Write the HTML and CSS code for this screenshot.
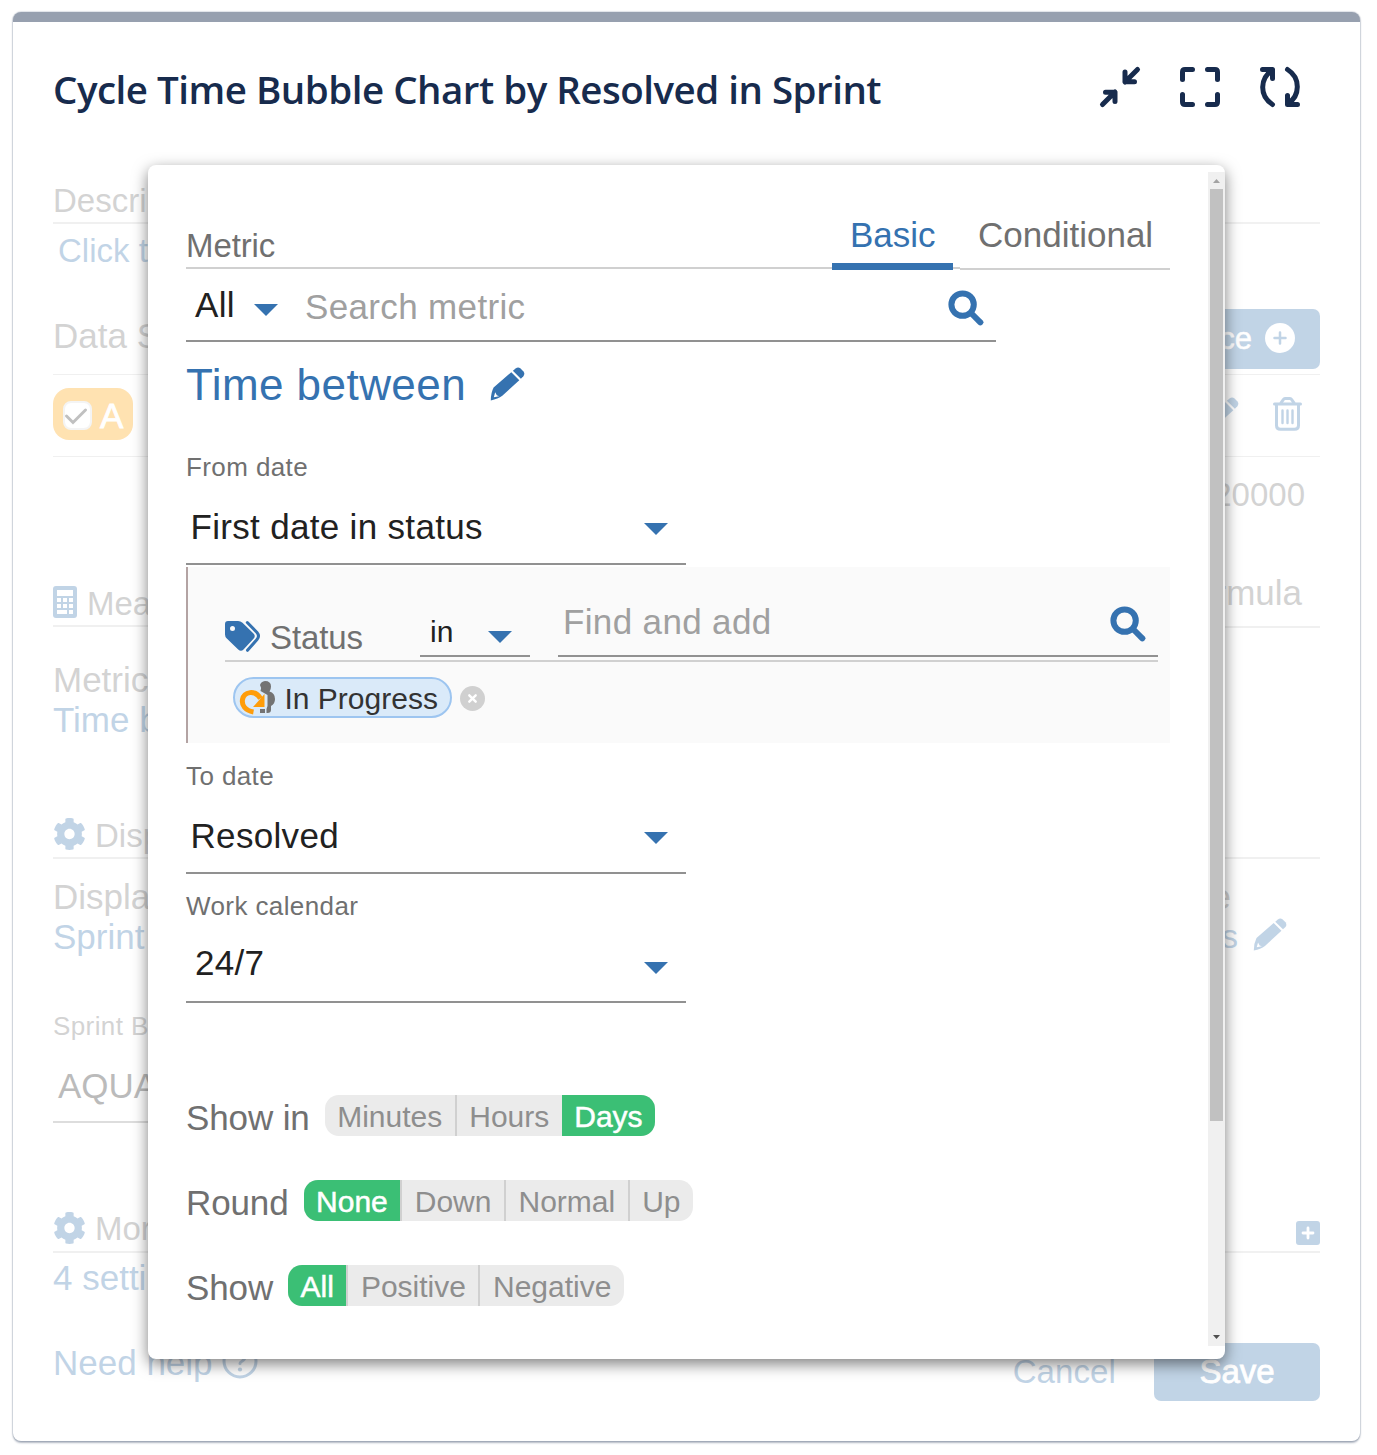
FILE: index.html
```html
<!DOCTYPE html>
<html lang="en">
<head>
<meta charset="utf-8">
<title>Cycle Time Bubble Chart by Resolved in Sprint</title>
<link rel="stylesheet" href="styles.css">
</head>
<body>
<svg class="sprite" width="0" height="0" aria-hidden="true">
  <symbol id="gear" viewBox="0 0 512 512"><path d="M487.4 315.7l-42.6-24.6c4.3-23.2 4.3-47 0-70.2l42.6-24.6c4.9-2.8 7.1-8.6 5.5-14-11.1-35.6-30-67.8-54.7-94.6-3.8-4.1-10-5.1-14.8-2.3L380.8 110c-17.9-15.4-38.5-27.3-60.8-35.1V25.8c0-5.6-3.9-10.5-9.4-11.7-36.7-8.2-74.3-7.8-109.2 0-5.5 1.2-9.4 6.1-9.4 11.7V75c-22.2 7.9-42.8 19.8-60.8 35.1L88.7 85.5c-4.9-2.8-11-1.9-14.8 2.3-24.7 26.7-43.6 58.9-54.7 94.6-1.7 5.4.6 11.2 5.5 14L67.3 221c-4.3 23.2-4.3 47 0 70.2l-42.6 24.6c-4.9 2.8-7.1 8.6-5.5 14 11.1 35.6 30 67.8 54.7 94.6 3.8 4.1 10 5.1 14.8 2.3l42.6-24.6c17.9 15.4 38.5 27.3 60.8 35.1v49.2c0 5.6 3.9 10.5 9.4 11.7 36.7 8.2 74.3 7.8 109.2 0 5.5-1.2 9.4-6.1 9.4-11.7v-49.2c22.2-7.9 42.8-19.8 60.8-35.1l42.6 24.6c4.9 2.8 11 1.9 14.8-2.3 24.7-26.7 43.6-58.9 54.7-94.6 1.5-5.5-.7-11.3-5.6-14.1zM256 336c-44.1 0-80-35.9-80-80s35.9-80 80-80 80 35.9 80 80-35.9 80-80 80z"/></symbol>
  <symbol id="pencil" viewBox="0 0 35 34"><path fill-rule="evenodd" d="M3.600 20.500L21.300 5.200l8 8L12.300 28.800Q8 32.200 .8 33.400Q.8 26 3.600 20.500ZM5.200 25.200L3.800 30.200L9.200 29.200L6.800 28.300Z"/><path d="M22.900 3.800L25.600 1.500Q28 -.2 30.300 1.300L33.500 4.500Q35.200 7 33.400 9.200L30.900 11.700Z"/></symbol>
  <symbol id="search" viewBox="0 0 36 36"><g fill="none" stroke="currentColor" stroke-width="6" stroke-linecap="round"><circle cx="14.600" cy="14.600" r="11.200"/><path d="M23 23L32.300 32.300"/></g></symbol>
  <symbol id="caret" viewBox="0 0 24 12"><path d="M0 0H24L12 12Z"/></symbol>
</svg>

<main class="card">
  <header class="card-head">
    <h1>Cycle Time Bubble Chart by Resolved in Sprint</h1>
    <div class="tools">
      <svg width="40" height="40" viewBox="0 0 40 40"><path d="M37.500 2.500L25 15M25 5V14.800H34.500M2.500 37.500L15 25M5.500 25.200H15V34.500"/></svg>
      <svg width="40" height="40" viewBox="0 0 40 40"><path d="M2.500 12.500V5Q2.500 2.500 5 2.500H12.500M27.500 2.500H35Q37.500 2.500 37.500 5V12.500M37.500 27.500V35Q37.500 37.500 35 37.500H27.500M12.500 37.500H5Q2.500 37.500 2.500 35V27.500"/></svg>
      <svg width="40" height="40" viewBox="0 0 40 40"><path d="M2.500 2.500H12.500V11.500M12 3.500C0 11 -1 29 12.500 37.500M37.500 37.500H27.500V28.500M28 36.500C40 29 41 11 27.500 2.500"/></svg>
    </div>
  </header>

  <div class="settings">
    <div class="section">Descrip</div>
    <div class="link description">Click t</div>

    <div class="sources-head">
      <span>Data S</span>
      <button class="add-source">Source
        <svg width="30" height="30" viewBox="0 0 30 30"><circle cx="15" cy="15" r="15" fill="#fff"/><path d="M15 9.500V20.500M9.500 15H20.500" stroke="#3572b0" stroke-width="2.500" stroke-linecap="round"/></svg>
      </button>
    </div>
    <div class="source">
      <div class="source-tag">
        <svg width="29" height="29" viewBox="0 0 29 29"><rect x="1" y="1" width="27" height="27" rx="7" fill="#fff" stroke="#ddd" stroke-width="2"/><path d="M3.500 15L10 21.500L22.500 9" fill="none" stroke="#333" stroke-width="3" stroke-linecap="round"/></svg>
        <span>A</span>
      </div>
      <div class="source-actions">
        <svg width="35" height="34"><use href="#pencil"/></svg>
        <svg width="29" height="35" viewBox="0 0 29 35"><g fill="none" stroke="#3572b0" stroke-linecap="round"><path stroke-width="3" d="M1.500 7H27.500M7.500 6.500L10.500 2.300Q11 1.500 12 1.500H17Q18 1.500 18.500 2.300L21.500 6.500M3.500 8V28.500Q3.500 32.300 7.500 32.300H21.500Q25.500 32.300 25.500 28.500V8"/><path stroke-width="2.400" d="M9.500 13.500V26M14.500 13.500V26M19.500 13.500V26"/></g></svg>
      </div>
    </div>
    <div class="limit">20000</div>

    <div class="measure-head">
      <div class="measure-title">
        <svg width="24" height="32" viewBox="0 0 24 32"><rect width="24" height="32" rx="3"/><path fill="#fff" d="M4 4H20V10H4ZM4 12H8V16H4ZM10 12H14V16H10ZM16 12H20V16H16ZM4 18H8V22H4ZM10 18H14V22H10ZM16 18H20V22H16ZM4 24H14V28H4ZM16 24H20V28H16Z"/></svg>
        <span>Mea</span>
      </div>
      <div class="measure-tab">Formula</div>
    </div>
    <div class="field measure-field"><span>Metric</span><span class="link">Time b</span></div>

    <div class="section display-head"><svg width="33" height="34"><use href="#gear"/></svg><span>Disp</span></div>
    <div class="columns">
      <div class="field"><span>Displa</span><span class="link">Sprint</span></div>
      <div class="field right-field"><span>e</span><div class="link">s <svg width="34" height="33"><use href="#pencil"/></svg></div></div>
    </div>
    <div class="small board-label">Sprint B</div>
    <div class="board">AQUA</div>

    <div class="section more-head"><svg width="33" height="34"><use href="#gear"/></svg><span>Mor</span>
      <svg class="expand" width="24" height="24" viewBox="0 0 24 24"><rect width="24" height="24" rx="3"/><path d="M12 7V17M7 12H17" stroke="#fff" stroke-width="2.800" stroke-linecap="round"/></svg>
    </div>
    <div class="link more-value">4 setti</div>

    <footer>
      <a class="help">Need help <svg width="36" height="36" viewBox="0 0 36 36"><circle cx="18" cy="18" r="16" fill="none" stroke="#3572b0" stroke-width="3"/><path d="M13 14Q13 9.500 18 9.500Q23 9.500 23 14Q23 16.500 20 18.200Q18 19.300 18 20.500" fill="none" stroke="#3572b0" stroke-width="3" stroke-linecap="round"/><circle cx="18" cy="26.500" r="2.100"/></svg></a>
      <a class="cancel">Cancel</a>
      <button class="save">Save</button>
    </footer>
  </div>
</main>

<section class="dialog">
  <div class="dialog-body">
    <div class="dialog-head">
      <div class="dialog-title">Metric</div>
      <div class="tab active">Basic</div>
      <div class="tab-gap"></div>
      <div class="tab">Conditional</div>
    </div>
    <div class="metric-search">
      <span class="scope">All</span>
      <svg class="caret" width="24" height="12"><use href="#caret"/></svg>
      <span class="hint">Search metric</span>
      <svg class="find" width="36" height="36"><use href="#search"/></svg>
    </div>
    <div class="metric-name"><span>Time between</span><svg width="35" height="34"><use href="#pencil"/></svg></div>

    <div class="small from-label">From date</div>
    <div class="select"><span>First date in status</span><svg width="24" height="12"><use href="#caret"/></svg></div>

    <div class="filter">
      <div class="filter-row">
        <svg class="tags" width="35" height="31" viewBox="0 0 35 31"><path fill-rule="evenodd" d="M0 3Q0 0 3 0H13Q15.500 0 17.500 1.800L28.500 12.500Q31 15 28.500 17.800L18.500 28.500Q16 31 13.200 28.500L1.800 17.500Q0 15.700 0 13.500ZM7.500 5A2.500 2.500 0 1 0 7.500 10A2.500 2.500 0 1 0 7.500 5Z"/><path d="M22.300 1.500L32 11.500Q35 15 32 18.500L22.500 29.300" fill="none" stroke="currentColor" stroke-width="3" stroke-linecap="round"/></svg>
        <span class="filter-name">Status</span>
        <div class="operator"><span>in</span><svg width="24" height="12"><use href="#caret"/></svg></div>
        <div class="finder"><span class="hint">Find and add</span><svg width="36" height="36"><use href="#search"/></svg></div>
      </div>
      <div class="chips">
        <div class="chip">
          <svg width="36" height="34" viewBox="0 0 36 34"><g fill="#737373"><path d="M25 0Q31 0 31 5.500Q31 8.500 29.500 10.500Q35 12 35 18Q35 23 31 25V29Q31 32 27.500 32H26.500V28L27.500 25V14L20.500 10Q22 7 20 4Q21 .5 25 0Z"/><path d="M20 28H25V32H20Z"/></g><path d="M13.500 31C5 29.500 1.500 24 2.500 18.500C4 10.500 15 8.500 20.500 17.500" fill="none" stroke="#ff9d0a" stroke-width="5"/><path fill="#ff9d0a" d="M24.500 13V26H13L17.500 21Z"/></svg>
          <span>In Progress</span>
        </div>
        <svg class="remove" width="25" height="25" viewBox="0 0 25 25"><circle cx="12.500" cy="12.500" r="12.500" fill="#d0d0d0"/><path d="M9.300 9.300L15.700 15.700M15.700 9.300L9.300 15.700" stroke="#fff" stroke-width="2.400" stroke-linecap="round"/></svg>
      </div>
    </div>

    <div class="small to-label">To date</div>
    <div class="select"><span>Resolved</span><svg width="24" height="12"><use href="#caret"/></svg></div>
    <div class="small calendar-label">Work calendar</div>
    <div class="select calendar"><span>24/7</span><svg width="24" height="12"><use href="#caret"/></svg></div>

    <div class="options">
      <div class="option"><span>Show in</span><div class="segments"><b>Minutes</b><b>Hours</b><b class="on">Days</b></div></div>
      <div class="option"><span>Round</span><div class="segments"><b class="on">None</b><b>Down</b><b>Normal</b><b>Up</b></div></div>
      <div class="option"><span>Show</span><div class="segments"><b class="on">All</b><b>Positive</b><b>Negative</b></div></div>
    </div>
  </div>
  <div class="scrollbar">
    <svg width="17" height="17" viewBox="0 0 17 17"><path d="M5 11H12L8.500 7Z" fill="#a3a3a3"/></svg>
    <div class="thumb"></div>
    <svg class="down" width="17" height="17" viewBox="0 0 17 17"><path d="M5 6H12L8.500 10Z" fill="#505050"/></svg>
  </div>
</section>
</body>
</html>
```
FILE: styles.css
```css
* { box-sizing: border-box; }
body {
  margin: 0;
  padding: 12px 17px 14px 13px;
  height: 1455px;
  overflow: hidden;
  background: #fff;
  font-family: "Liberation Sans", Arial, sans-serif;
  font-size: 35px;
  line-height: 40px;
  color: #707070;
  white-space: nowrap;
}
svg { display: block; flex: none; fill: #3572b0; color: #3572b0; overflow: visible; }
.sprite { position: absolute; }
button { border: 0; padding: 0; font: inherit; color: #fff; background: #3572b0; border-radius: 7px; }

.card {
  height: 1429px;
  padding: 0 40px;
  border-top: 10px solid #97a0af;
  border-radius: 8px;
  background: #fff;
  box-shadow: 0 0 1px 1px rgba(9, 30, 66, .13), 0 2px 2px rgba(9, 30, 66, .3);
}
.card-head { display: flex; justify-content: space-between; height: 93px; padding: 39px 20px 0 0; }
h1 {
  margin: 1px 0 0;
  font: 600 38.5px/54px "Open Sans", "Noto Sans", sans-serif;
  letter-spacing: -.5px;
  color: #172b4d;
}
.tools { display: flex; gap: 40px; padding-top: 6px; }
.tools path { fill: none; stroke: #172b4d; stroke-width: 5; stroke-linecap: round; stroke-linejoin: round; }

.settings { opacity: .3; padding-top: 66px; }
.link { color: #3572b0; }
.small { font-size: 26px; line-height: 30px; letter-spacing: .4px; }
.section {
  display: flex;
  gap: 9px;
  height: 43px;
  border-bottom: 2px solid #d0d0d0;
  font-size: 33px;
}
.description { margin-top: 7px; padding-left: 5px; font-size: 33px; }
.sources-head {
  display: flex;
  justify-content: space-between;
  height: 66px;
  margin-top: 38px;
  border-bottom: 1px solid #d0d0d0;
}
.sources-head > span { padding-top: 7px; }
.add-source { display: flex; align-items: center; gap: 13px; height: 60px; padding: 0 25px; font-size: 31px; -webkit-text-stroke: .5px #fff; }
.add-source svg { margin-top: -2px; }
.source { display: flex; justify-content: space-between; height: 82px; padding-top: 13px; border-bottom: 1px solid #d0d0d0; }
.source-tag {
  display: flex;
  gap: 8px;
  width: 80px;
  height: 52px;
  padding: 13px 10px;
  border-radius: 16px;
  background: #ffa000;
  color: #fff;
  -webkit-text-stroke: .8px #fff;
}
.source-tag span { margin-top: -5px; }
.source-actions { display: flex; gap: 34px; padding: 9px 18px 0 0; }
.limit { margin-top: 18px; padding-right: 15px; text-align: right; font-size: 33px; }
.measure-head { display: flex; height: 56px; margin-top: 57px; }
.measure-title {
  display: flex;
  flex: 1;
  gap: 10px;
  height: 55px;
  padding-top: 12px;
  border-bottom: 2px solid #d0d0d0;
  font-size: 33px;
}
.measure-title svg { margin-top: 2px; }
.measure-tab { width: 170px; padding: 1px 18px 0 0; text-align: right; border-bottom: 2px solid #d0d0d0; }
.field { display: flex; flex-direction: column; }
.measure-field { margin-top: 32px; }
.display-head { margin-top: 76px; }
.section > svg { margin: 1px 0 0; }
.columns { display: flex; justify-content: space-between; height: 79px; margin-top: 18px; }
.right-field { text-align: right; }
.right-field > span { padding-right: 89px; }
.right-field .link { display: flex; justify-content: flex-end; gap: 15px; padding-right: 33px; font-size: 33px; }
.right-field svg { margin-top: 1px; }
.board-label { margin-top: 55px; }
.board { width: 500px; height: 82px; padding: 25px 0 0 5px; border-bottom: 2px solid #919191; color: #212121; }
.more-head { margin-top: 87px; }
.more-head > span { margin-top: -1px; }
.more-head > .expand { margin: 11px 0 0 auto; }
.more-value { margin-top: 5px; }
footer { display: flex; margin-top: 45px; height: 58px; color: #3572b0; }
.help { display: flex; flex: 1; gap: 9px; }
.cancel { margin-right: 38px; font-size: 33px; letter-spacing: .1px; line-height: 58px; }
.save { width: 166px; font-size: 33px; line-height: 58px; -webkit-text-stroke: .8px #fff; }

.dialog {
  position: absolute;
  left: 148px;
  top: 165px;
  display: flex;
  justify-content: space-between;
  width: 1077px;
  height: 1194px;
  padding: 7px 0 13px 38px;
  border-radius: 8px;
  background: #fff;
  box-shadow: 0 5px 15px rgba(0, 0, 0, .5);
}
.dialog-body { width: 984px; padding-top: 43px; }
.dialog-head { display: flex; }
.dialog-title { flex: 1; height: 54px; padding-top: 11px; border-bottom: 2px solid #d0d0d0; font-size: 33px; letter-spacing: -.1px; }
.tab { width: 210px; height: 55px; padding-left: 18px; border-bottom: 2px solid #d0d0d0; }
.tab.active { width: 121px; border-bottom: 7px solid #3572b0; color: #3572b0; }
.tab-gap { width: 7px; height: 54px; border-bottom: 2px solid #d0d0d0; }

.metric-search {
  display: flex;
  width: 810px;
  height: 72px;
  padding: 15px 12px 0 9px;
  border-bottom: 2px solid #919191;
}
.scope { width: 59px; color: #212121; letter-spacing: .3px; }
.caret { margin-top: 19px; }
.hint { color: #a0a0a0; letter-spacing: .35px; }
.metric-search .hint { flex: 1; padding: 2px 0 0 27px; }
.find { margin-top: 5px; }
.metric-name { display: flex; gap: 24px; margin-top: 18px; font-size: 44px; line-height: 50px; letter-spacing: .45px; color: #3572b0; }
.metric-name svg { margin-top: 7px; }
.from-label { margin-top: 42px; }
.select {
  display: flex;
  justify-content: space-between;
  width: 500px;
  height: 83px;
  padding: 25px 18px 0 4.5px;
  border-bottom: 2px solid #919191;
  color: #212121;
  letter-spacing: .32px;
}
.select svg { margin-top: 16px; }

.filter { height: 176px; margin-top: 2px; padding: 0 12px 0 37px; border-left: 2px solid #b3a3a3; background: #fafafa; }
.filter-row { display: flex; height: 95px; border-bottom: 2px solid #d0d0d0; }
.tags { margin-top: 54px; }
.filter-name { width: 160px; padding: 51px 0 0 10px; font-size: 33px; letter-spacing: -.1px; }
.operator {
  display: flex;
  justify-content: space-between;
  width: 110px;
  height: 90px;
  padding: 45px 18px 0 10px;
  border-bottom: 2px solid #919191;
  font-size: 30px;
  color: #212121;
}
.operator svg { margin-top: 19px; }
.finder {
  display: flex;
  justify-content: space-between;
  width: 600px;
  height: 90px;
  margin-left: 28px;
  padding: 35px 12px 0 5px;
  border-bottom: 2px solid #919191;
}
.finder svg { margin-top: 4px; }
.chips { display: flex; gap: 8px; margin: 15px 0 0 8px; }
.chip {
  display: flex;
  gap: 8.5px;
  width: 219px;
  height: 41px;
  padding: 0 5px;
  border: 2px solid #9dc5f0;
  border-radius: 21px;
  background: #daeaf9;
  font-size: 30px;
  color: #333;
}
.chip svg { margin-top: 2px; }
.remove { margin-top: 9px; }

.to-label { margin-top: 18px; }
.calendar-label { margin-top: 17px; }
.calendar { height: 82px; padding: 22px 18px 0 9px; }
.calendar svg { margin-top: 19px; }

.options { display: flex; flex-direction: column; gap: 44px; margin-top: 92px; }
.option { display: flex; gap: 15px; height: 41px; }
.option > span { padding-top: 3px; letter-spacing: -.12px; }
.segments { display: flex; height: 41px; border-radius: 14px; overflow: hidden; background: #ebebeb; font-size: 30px; color: #8e8e8e; }
.segments b { padding: 2px 12.5px 0; font-weight: 400; }
.segments b + b:not(.on) { border-left: 2px solid #d0d0d0; }
.segments .on { background: #3bbf75; color: #fff; -webkit-text-stroke: .5px #fff; }

.scrollbar { display: flex; flex-direction: column; align-items: center; width: 17px; background: #f0f0f0; }
.thumb { width: 13px; height: 932px; background: #c1c1c1; }
.down { margin-top: auto; }
```
